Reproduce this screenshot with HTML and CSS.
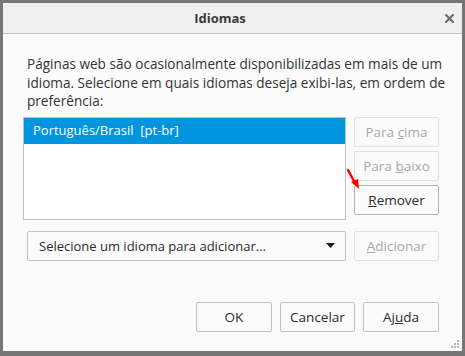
FILE: index.html
```html
<!DOCTYPE html>
<html lang="pt-BR">
<head>
<meta charset="utf-8">
<title>Idiomas</title>
<link rel="stylesheet" href="styles.css">
</head>
<body>
<div class="dialog">
  <div class="titlebar">
    <div class="title">Idiomas</div>
    <div class="close">
      <svg width="9" height="9" viewBox="0 0 9 9"><path d="M1 1L8 8M8 1L1 8" stroke="#6d6d6d" stroke-width="2.2" stroke-linecap="square"/></svg>
    </div>
  </div>
  <div class="content">
    <p class="desc">Páginas web são ocasionalmente disponibilizadas em mais de um idioma. Selecione em quais idiomas deseja exibi-las, em ordem de preferência:</p>
    <div class="list-row">
      <div class="listbox">
        <div class="item selected">Português/Brasil  [pt-br]</div>
      </div>
      <div class="side-buttons">
        <button class="btn disabled">Para <u>c</u>ima</button>
        <button class="btn disabled">Para <u>b</u>aixo</button>
        <button class="btn strong"><u>R</u>emover</button>
      </div>
      <svg class="arrow" width="16" height="24" viewBox="0 0 16 24">
        <path d="M2 2L9 15" stroke="#f00" stroke-width="2.4" stroke-linecap="round"/>
        <path d="M5 14L13 21L12 11Z" fill="#f00"/>
      </svg>
    </div>
    <div class="add-row">
      <div class="select">
        <span>Selecione um idioma para adicionar...</span>
        <svg width="9" height="5" viewBox="0 0 9 5"><path d="M0 0H9L4.5 5Z" fill="#1a1a1a"/></svg>
      </div>
      <button class="btn disabled"><u>A</u>dicionar</button>
    </div>
  </div>
  <div class="footer">
    <button class="btn ok">OK</button>
    <button class="btn cancel">Cancelar</button>
    <button class="btn help">Aj<u>u</u>da</button>
    <svg class="grip" width="8" height="8" viewBox="0 0 8 8">
      <rect x="6" y="0" width="2" height="2" fill="#b8b8b8"/>
      <rect x="3" y="3" width="2" height="2" fill="#b8b8b8"/>
      <rect x="6" y="3" width="2" height="2" fill="#b8b8b8"/>
      <rect x="0" y="6" width="2" height="2" fill="#b8b8b8"/>
      <rect x="3" y="6" width="2" height="2" fill="#b8b8b8"/>
      <rect x="6" y="6" width="2" height="2" fill="#b8b8b8"/>
    </svg>
  </div>
</div>
</body>
</html>
```
FILE: styles.css
```css
html, body {
  margin: 0;
  padding: 0;
}
body {
  background: #767676;
  width: 465px;
  height: 356px;
  overflow: hidden;
  font-family: "Open Sans", "Noto Sans", sans-serif;
  font-size: 13px;
  color: #2b2b2b;
}
.dialog {
  position: relative;
  margin: 3px 0 0 3px;
  width: 459px;
  height: 348px;
  background: #fbfbfb;
  display: flex;
  flex-direction: column;
}
.titlebar {
  height: 30px;
  background: #f0f0f0;
  border-bottom: 1px solid #c3c3c3;
  display: flex;
  align-items: center;
}
.title {
  flex: 1;
  text-align: center;
  font-weight: bold;
  font-size: 13px;
  color: #3a3a3a;
}
.close {
  width: 25px;
  display: flex;
  justify-content: center;
  align-items: center;
}
.content {
  padding: 21px 23px 0 24px;
  display: flex;
  flex-direction: column;
}
.desc {
  margin: 0 -12px 0 0;
  font-size: 13.6px;
  line-height: 18.5px;
  color: #333;
}
.list-row {
  position: relative;
  display: flex;
  margin-top: 6px;
  margin-left: -4px;
}
.listbox {
  width: 321px;
  height: 101px;
  border: 1px solid #c0c0c0;
  background: #fff;
}
.item {
  height: 26px;
  line-height: 25px;
  padding-left: 9px;
  white-space: pre;
  font-size: 13px;
}
.selected {
  background: #0095dc;
  color: #fff;
}
.side-buttons {
  margin-left: 8px;
  display: flex;
  flex-direction: column;
  gap: 4px;
}
.btn {
  font-family: inherit;
  font-size: 13.5px;
  height: 30px;
  width: 85px;
  padding: 0;
  border: 1px solid #c2c2c2;
  border-radius: 2px;
  background: #fbfbfb;
  color: #2b2b2b;
}
.btn.disabled {
  color: #a8a8a8;
  border-color: #e0e0e0;
}
.btn.strong {
  border-color: #b3b3b3;
}
.arrow {
  position: absolute;
  left: 323px;
  top: 51px;
}
.add-row {
  display: flex;
  gap: 8px;
  margin-top: 11px;
}
.select {
  border: 1px solid #c2c2c2;
  border-radius: 2px;
  background: #fbfbfb;
  display: flex;
  align-items: center;
  justify-content: space-between;
  padding: 0 10px 0 11px;
  box-sizing: border-box;
  width: 319px;
  height: 30px;
}
.footer {
  margin-top: auto;
  position: relative;
  display: flex;
  justify-content: flex-end;
  gap: 8px;
  padding: 0 23px 19px 0;
}
.ok { width: 76px; }
.cancel { width: 75px; }
.help { width: 76px; }
.grip {
  position: absolute;
  right: 3px;
  bottom: 3px;
}
```
